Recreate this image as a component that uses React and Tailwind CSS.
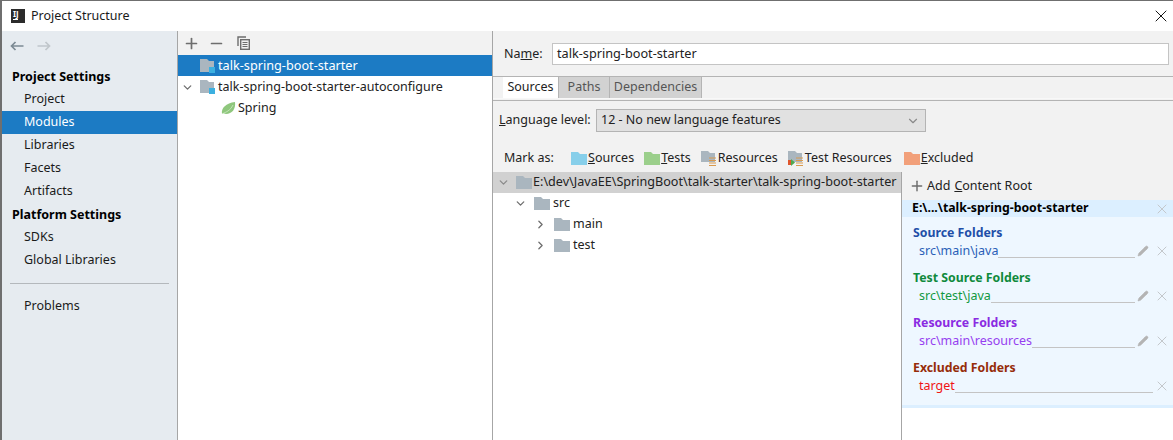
import React from 'react';
import { ChevronDown, ChevronRight, Plus, Minus, X, Pencil } from 'lucide-react';

const FONT = { fontFamily: '"Noto Sans", "Open Sans", sans-serif' };

const Folder = ({ color = '#aab6bf', className = '' }) => (
  <svg width="16" height="13" viewBox="0 0 16 13" className={`shrink-0 ${className}`}>
    <path d="M0 0h7l2 2h7v11H0z" fill={color} />
  </svg>
);

const ModuleIcon = () => (
  <svg width="16" height="15" viewBox="0 0 16 15" className="shrink-0">
    <path d="M0 0h7l2 2h5v11H0z" fill="#aab6bf" />
    <rect x="9" y="8" width="6" height="6" fill="#3cb0e0" />
  </svg>
);

const ResourceIcon = ({ test }) => (
  <svg width="16" height="15" viewBox="0 0 16 15" className="shrink-0">
    <path d="M0 0h7l2 2h5v9H0z" fill="#aab6bf" />
    <path d="M8 7h7M8 9.5h7M8 12h7M8 14.5h7" stroke="#d99a4e" strokeWidth="1" />
    {test && <path d="M0 9h3v5H0z" fill="#e0562c" />}
    {test && <path d="M3 8l4 3.5L3 15z" fill="#4fa84f" />}
  </svg>
);

const NavArrow = ({ color, flip }) => (
  <svg width="14" height="10" viewBox="0 0 14 10" fill="none" stroke={color} strokeWidth="1.7" className={flip ? 'rotate-180' : ''}>
    <path d="M13.5 5H1.5M5.5 1L1.5 5l4 4" />
  </svg>
);

const SideItem = ({ label, active }) => (
  <div className={`h-[23px] pl-[22px] flex items-center text-[12.5px] ${active ? 'bg-[#1c7bc4] text-white' : 'text-[#1a1a1a]'}`}>
    {label}
  </div>
);

const SideTitle = ({ label }) => (
  <div className="h-[23px] pl-[10px] pt-[1px] flex items-center text-[12.5px] font-bold text-black">{label}</div>
);

const MarkItem = ({ icon, first, rest }) => (
  <div className="flex items-center gap-[1px] text-[12.5px] text-[#222]">
    {icon}
    <span><span className="underline">{first}</span>{rest}</span>
  </div>
);

const TreeRow = ({ indent, open, label }) => (
  <div className="h-[21px] flex items-center text-[12.5px] text-[#222]" style={{ paddingLeft: indent }}>
    {open ? <ChevronDown size={13} strokeWidth={2.4} className="shrink-0 text-[#6e6e6e] mr-[7px]" /> : <ChevronRight size={13} strokeWidth={2.4} className="shrink-0 text-[#6e6e6e] mr-[7px]" />}
    <Folder className="mr-[3px]" />
    {label}
  </div>
);

const FolderGroup = ({ title, titleClass, path, pathClass, edit = true }) => (
  <div className="h-[45px] pt-[7px]">
    <div className={`pl-[11px] h-[18px] flex items-center text-[12.3px] font-bold ${titleClass}`}>{title}</div>
    <div className="h-[18px] pl-[17px] pr-[3px] flex items-center text-[12.5px]">
      <span className={pathClass}>{path}</span>
      <div className="flex-1 h-[13px] border-b border-[#c4c4c4]" />
      {edit && <Pencil size={12} fill="#b4b4b4" strokeWidth={1} className="shrink-0 text-[#b4b4b4] ml-[2px] mr-[4px]" />}
      <X size={16} strokeWidth={1.5} className="shrink-0 text-[#c4c8cc] ml-[1px]" />
    </div>
  </div>
);

const App = () => {
  return (
    <div className="w-[1173px] h-[440px] overflow-hidden bg-white border-t border-[#6f6f6f] border-l-2 flex flex-col" style={FONT}>
      {/* Title bar */}
      <div className="h-[30px] shrink-0 flex items-center pl-[9px] pr-[2px] bg-white">
        <div className="w-[14px] h-[14px] bg-[#2b2b2b] text-white text-[8px] font-bold leading-[9px] pl-[2px] mr-[6px] flex flex-col">
          IJ
          <div className="w-[5px] h-px bg-white mt-[1px]" />
        </div>
        <span className="text-[12.5px] text-[#1a1a1a]">Project Structure</span>
        <X size={20} strokeWidth={1.1} className="ml-auto text-black" />
      </div>

      <div className="flex-1 flex min-h-0">
        {/* Sidebar */}
        <div className="w-[176px] shrink-0 bg-[#e6ebf0] border-r border-[#a6a6a6] flex flex-col">
          <div className="h-[34px] pl-[8px] pb-[5px] flex items-center gap-[13px]">
            <NavArrow color="#7c8a94" />
            <NavArrow color="#c0c6cb" flip />
          </div>
          <SideTitle label="Project Settings" />
          <SideItem label="Project" />
          <SideItem label="Modules" active />
          <SideItem label="Libraries" />
          <SideItem label="Facets" />
          <SideItem label="Artifacts" />
          <SideTitle label="Platform Settings" />
          <SideItem label="SDKs" />
          <SideItem label="Global Libraries" />
          <div className="h-[23px] flex items-center px-[8px]">
            <div className="w-full h-px bg-[#b4b8bc]" />
          </div>
          <SideItem label="Problems" />
        </div>

        {/* Module tree */}
        <div className="w-[315px] shrink-0 bg-white border-r border-[#a6a6a6] flex flex-col">
          <div className="h-[24px] bg-[#f2f2f2] flex items-center pl-[5px] gap-[8px] text-[#6e6e6e]">
            <Plus size={17} strokeWidth={2.4} />
            <Minus size={17} strokeWidth={2.4} />
            <svg width="13" height="14" viewBox="0 0 13 14" fill="none" stroke="#6e6e6e" strokeWidth="1.4" className="ml-[4px]">
              <path d="M1 10V1h8" />
              <rect x="3.7" y="3.7" width="8.6" height="9.6" />
              <path d="M5.5 6.5h5M5.5 8.5h5M5.5 10.5h5" strokeWidth="1" />
            </svg>
          </div>
          <div className="h-[21px] pt-[1px] bg-[#1c7bc4] text-white text-[12.7px] flex items-center pl-[22px] gap-[2px]">
            <ModuleIcon />
            talk-spring-boot-starter
          </div>
          <div className="h-[21px] pt-[1px] text-[12.5px] text-[#222] flex items-center pl-[3px] gap-[2px]">
            <ChevronDown size={13} strokeWidth={2.4} className="shrink-0 text-[#6e6e6e] mr-[4px]" />
            <ModuleIcon />
            <span className="whitespace-nowrap">talk-spring-boot-starter-autoconfigure</span>
          </div>
          <div className="h-[21px] pt-[2px] text-[12.5px] text-[#222] flex items-center pl-[43px] gap-[2px]">
            <svg width="15" height="13" viewBox="0 0 15 13">
              <path d="M1 12C0 6 5 1 14 0c1 7-3 12-9 12-1 0-3-1-3-1z" fill="#8fc77d" />
              <path d="M2 11.5C5 10 9 9 12 3" stroke="#d8efcf" strokeWidth="0.7" fill="none" />
            </svg>
            Spring
          </div>
        </div>

        {/* Module settings */}
        <div className="flex-1 min-w-0 bg-[#f2f2f2] flex flex-col">
          <div className="h-[45px] shrink-0 flex items-center pl-[11px] pr-[3px]">
            <span className="text-[12.5px] text-[#222] w-[48px] pt-[1px]">Na<span className="underline">m</span>e:</span>
            <div className="w-[617px] h-[22px] bg-white border border-[#c4c4c4] pl-[4px] pt-[1px] flex items-center text-[12.7px] text-[#222]">
              talk-spring-boot-starter
            </div>
          </div>
          <div className="h-[22px] shrink-0 border-t border-[#b4b4b4] flex pl-[10px] text-[12.5px]">
            <div className="w-[56px] bg-white border-r border-[#b4b4b4] flex items-center justify-center text-[#222]">Sources</div>
            <div className="w-[51px] bg-[#d2d2d2] border-r border-[#b4b4b4] flex items-center justify-center text-[#555]">Paths</div>
            <div className="w-[92px] bg-[#d2d2d2] border-r border-[#b4b4b4] flex items-center justify-center text-[#555]">Dependencies</div>
          </div>
          <div className="h-[3px] shrink-0 border-b border-[#b4b4b4] border-t border-t-[#f8f8f8]" />
          <div className="h-[38px] shrink-0 flex items-center pl-[6px] pt-[1px]">
            <span className="text-[12.5px] text-[#222] w-[97px]"><span className="underline">L</span>anguage level:</span>
            <div className="w-[330px] h-[23px] bg-[#e1e1e1] border border-[#b4b4b4] flex items-center pl-[4px] pr-[5px] text-[12.5px] text-[#222]">
              12 - No new language features
              <ChevronDown size={14} className="ml-auto text-[#8a8a8a]" />
            </div>
          </div>
          <div className="h-[33px] shrink-0 flex items-center pl-[11px] pt-[5px]">
            <span className="text-[12.5px] text-[#222] w-[67px]">Mark as:</span>
            <div className="flex items-center gap-[10px]">
              <MarkItem icon={<Folder color="#87cfea" />} first="S" rest="ources" />
              <MarkItem icon={<Folder color="#9bcf8b" />} first="T" rest="ests" />
              <MarkItem icon={<ResourceIcon />} first="" rest="Resources" />
              <MarkItem icon={<ResourceIcon test />} first="" rest="Test Resources" />
              <MarkItem icon={<Folder color="#f2a07a" className="ml-[2px]" />} first="E" rest="xcluded" />
            </div>
          </div>

          <div className="flex-1 min-h-0 flex">
            {/* Content root tree */}
            <div className="w-[408px] shrink-0 bg-white">
              <div className="h-[21px] bg-[#d1d1d1] flex items-center pl-[4px] text-[12.6px] text-[#222] whitespace-nowrap">
                <ChevronDown size={13} strokeWidth={2.4} className="shrink-0 text-[#8a8a8a] mr-[6px]" />
                <Folder className="mr-[1px]" />
                {'E:\\dev\\JavaEE\\SpringBoot\\talk-starter\\talk-spring-boot-starter'}
              </div>
              <TreeRow indent={21} open label="src" />
              <TreeRow indent={41} label="main" />
              <TreeRow indent={41} label="test" />
            </div>

            {/* Content root details */}
            <div className="flex-1 min-w-0 bg-white border-l border-[#a6a6a6]">
              <div className="h-[28px] bg-[#f2f2f2] flex items-center pl-[7px] text-[12.5px] text-[#222]">
                <Plus size={16} strokeWidth={2.2} className="text-[#6e6e6e] mr-[2px]" />
                Add <span className="underline ml-[4px]">C</span>ontent Root
              </div>
              <div className="h-[17px] bg-[#dcefff] flex items-center pl-[10px] pr-[3px] text-[12.3px] font-bold text-black">
                {'E:\\...\\talk-spring-boot-starter'}
                <X size={16} strokeWidth={1.5} className="ml-auto text-[#c4c8cc]" />
              </div>
              <div className="bg-[#eef7ff] pb-[8px]">
                <FolderGroup title="Source Folders" titleClass="text-[#1f4fa8]" path={'src\\main\\java'} pathClass="text-[#2a5fb8]" />
                <FolderGroup title="Test Source Folders" titleClass="text-[#0f8a3c]" path={'src\\test\\java'} pathClass="text-[#12993f]" />
                <FolderGroup title="Resource Folders" titleClass="text-[#8a2be2]" path={'src\\main\\resources'} pathClass="text-[#9640f0]" />
                <FolderGroup title="Excluded Folders" titleClass="text-[#962d0a]" path="target" pathClass="text-[#f01414]" edit={false} />
              </div>
              <div className="h-[3px] bg-[#dcefff]" />
            </div>
          </div>
        </div>
      </div>
    </div>
  );
};

export default App;
